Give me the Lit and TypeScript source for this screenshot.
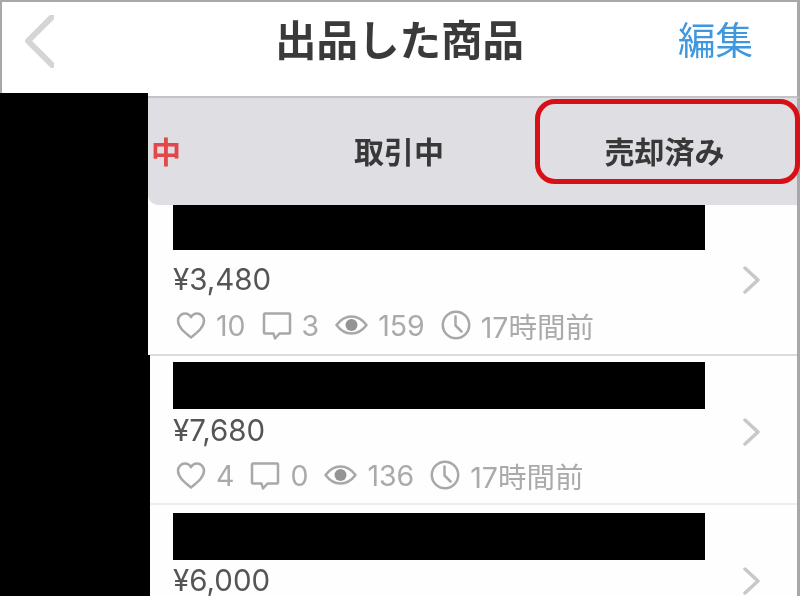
import { LitElement, html, css, svg } from "lit";
import { customElement } from "lit/decorators.js";

const heart = svg`<path d="M15 26.500C9 21.500 2 16.500 2 9.800 2 5.600 5.200 2.500 9 2.500c2.600 0 4.800 1.300 6 3.800 1.200-2.500 3.400-3.800 6-3.800 3.800 0 7 3.100 7 7.300 0 6.700-7 11.700-13 16.700z"/>`;
const bubble = svg`<path d="M3 2.500h24a1 1 0 0 1 1 1v18a1 1 0 0 1-1 1H17.500L13 27.500l-1.500-5H3a1 1 0 0 1-1-1v-18a1 1 0 0 1 1-1z"/>`;
const eye = svg`<path d="M1.500 13C6 7 11 4.500 16.500 4.500S27 7 31.500 13C27 19 22 21.500 16.500 21.500S6 19 1.500 13z"/><circle class="fill" cx="16.500" cy="13" r="6"/>`;
const clock = svg`<circle cx="15" cy="15" r="13.200"/><path d="M14.500 6.500V15.500L20.500 21.500"/>`;

interface Stat { icon: unknown; w: number; h: number; text: string }
interface Item { price: string; stats: Stat[]; cls: string }

const mk = (l: string, c: string, v: string): Stat[] => [
  { icon: heart, w: 30, h: 29, text: l },
  { icon: bubble, w: 30, h: 29, text: c },
  { icon: eye, w: 33, h: 26, text: v },
  { icon: clock, w: 30, h: 30, text: "17時間前" },
];

const items: Item[] = [
  { price: "¥3,480", stats: mk("10", "3", "159"), cls: "first" },
  { price: "¥7,680", stats: mk("4", "0", "136"), cls: "second" },
  { price: "¥6,000", stats: [], cls: "third" },
];

@customElement("app-root")
export class AppRoot extends LitElement {
  static styles = css`
    :host {
      display: flex;
      flex-direction: column;
      width: 800px;
      height: 596px;
      overflow: hidden;
      position: relative;
      background: #fefefe;
      box-sizing: border-box;
      border-top: 2px solid #a8a8a8;
      font-family: Inter, "Noto Sans CJK JP", sans-serif;
    }
    .header {
      flex: none;
      height: 96px;
      box-sizing: border-box;
      display: grid;
      grid-template-columns: 1fr auto 1fr;
      align-items: center;
      border-left: 2px solid #a8a8a8;
      border-right: 3px solid #a8a8a8;
      border-bottom: 2px solid #c4c4c8;
      background: #fff;
      padding-bottom: 14px;
    }
    .back {
      width: 30px;
      height: 54px;
      margin-left: 22px;
      fill: none;
      stroke: #d5d5d5;
      stroke-width: 6;
      stroke-linecap: round;
      stroke-linejoin: round;
    }
    .title {
      font-family: "Noto Sans CJK JP", sans-serif;
      font-size: 41.500px;
      line-height: 50px;
      font-weight: 700;
      color: #3a3a3a;
      margin-bottom: 8px;
      filter: blur(0.6px);
    }
    .edit {
      justify-self: end;
      padding-right: 44px;
      font-family: "Noto Sans CJK JP", sans-serif;
      font-size: 37.500px;
      line-height: 50px;
      color: #3f97df;
      margin-bottom: 8px;
      filter: blur(0.6px);
    }
    .body {
      flex: 1;
      min-height: 0;
      display: flex;
    }
    .side {
      flex: none;
      width: 150px;
      margin-top: -5px;
      display: flex;
      flex-direction: column;
      position: relative;
      z-index: 1;
    }
    .side-top {
      flex: none;
      width: 148px;
      height: 262px;
      background: #000;
    }
    .side-bottom {
      flex: 1;
      background: #000;
    }
    .main {
      flex: 1;
      min-width: 0;
      display: flex;
      flex-direction: column;
      border-right: 3px solid #a8a8a8;
    }
    .tabs {
      flex: none;
      height: 107px;
      margin-left: -2px;
      display: grid;
      grid-template-columns: 118px 266px 1fr;
      align-items: center;
      background: #dedee3;
      border-bottom-left-radius: 10px;
      position: relative;
      font-family: "Noto Sans CJK JP", sans-serif;
      font-size: 30px;
      line-height: 40px;
      font-weight: 700;
      color: #383838;
    }
    .tabs > span {
      text-align: center;
      padding-bottom: 3px;
      filter: blur(0.6px);
    }
    .tabs > span.active {
      text-align: left;
      padding-left: 3px;
      color: #e2484a;
    }
    .ring {
      position: absolute;
      left: 387px;
      top: 1px;
      width: 265px;
      height: 85px;
      box-sizing: border-box;
      border: 5.500px solid #d80f17;
      border-radius: 20px;
    }
    .row {
      flex: none;
      box-sizing: border-box;
      display: flex;
      padding-left: 23px;
    }
    .row.first { height: 151px; border-bottom: 2px solid #dcdcdc; }
    .row.second { height: 149px; border-bottom: 2px solid #eeeeee; }
    .content {
      flex: none;
      width: 532px;
    }
    .bar {
      background: #000;
      height: 47px;
      margin-top: 6px;
    }
    .first .bar { height: 45px; margin-top: 0; }
    .third .bar { margin-top: 8px; }
    .price {
      font-size: 29.500px;
      line-height: 34px;
      color: #555;
      margin-top: 4px;
      filter: blur(0.6px);
    }
    .first .price { margin-top: 12px; }
    .third .price { margin-top: 3px; }
    .stats {
      display: flex;
      align-items: center;
      gap: 16px;
      height: 30px;
      margin-top: 14px;
      padding-left: 3px;
      font-size: 28.500px;
      color: #aaa;
    }
    .second .stats { margin-top: 13px; }
    .stat {
      display: flex;
      align-items: center;
      gap: 10px;
    }
    .stat span { filter: blur(0.6px); }
    .icon {
      flex: none;
      fill: none;
      stroke: #a8a8a8;
      stroke-width: 2.500;
      stroke-linecap: round;
      stroke-linejoin: round;
    }
    .icon .fill { fill: #949494; stroke: none; }
    .chev-wrap {
      flex: 1;
      display: flex;
      justify-content: flex-end;
      padding-right: 36px;
      align-items: flex-start;
    }
    .chev {
      width: 18px;
      height: 28px;
      margin-top: 61px;
      fill: none;
      stroke: #c8c8cc;
      stroke-width: 3.500;
      stroke-linecap: round;
      stroke-linejoin: round;
    }
    .row.second .chev, .row.third .chev { margin-top: 62px; }
  `;

  render() {
    return html`
      <div class="header">
        <svg class="back" viewBox="0 0 30 54"><polyline points="28,2 4,26 28,50"></polyline></svg>
        <div class="title">出品した商品</div>
        <div class="edit">編集</div>
      </div>
      <div class="body">
        <div class="side">
          <div class="side-top"></div>
          <div class="side-bottom"></div>
        </div>
        <div class="main">
          <div class="tabs">
            <span class="active">中</span>
            <span>取引中</span>
            <span>売却済み</span>
            <div class="ring"></div>
          </div>
          ${items.map(
            (it) => html`
              <div class="row ${it.cls}">
                <div class="content">
                  <div class="bar"></div>
                  <div class="price">${it.price}</div>
                  ${it.stats.length
                    ? html`<div class="stats">
                        ${it.stats.map(
                          (s) => html`<div class="stat">
                            <svg class="icon" width=${s.w} height=${s.h} viewBox="0 0 ${s.w} ${s.h}">${s.icon}</svg>
                            <span>${s.text}</span>
                          </div>`
                        )}
                      </div>`
                    : ""}
                </div>
                <div class="chev-wrap">
                  <svg class="chev" viewBox="0 0 18 28"><polyline points="2,2 15,14 2,26"></polyline></svg>
                </div>
              </div>
            `
          )}
        </div>
      </div>
    `;
  }
}
